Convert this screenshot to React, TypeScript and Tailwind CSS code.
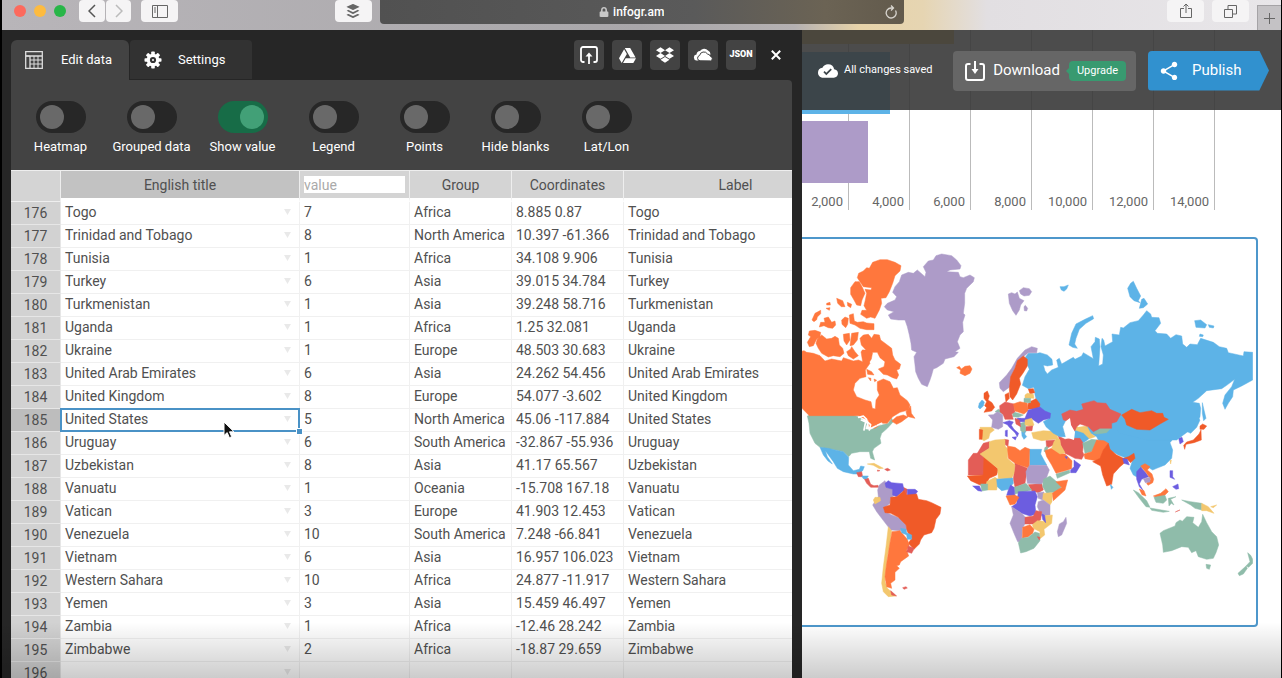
import React from "react";
import { FaBuffer, FaDropbox, FaGoogleDrive, FaLock } from "react-icons/fa";
import { MdCloudDone, MdShare } from "react-icons/md";

const ORANGE = "#ff773d";
const PURPLE = "#ad9bc8";
const RED = "#f05a28";
const GREEN = "#8fbcaa";
const BLUE = "#5db3e7";
const YELLOW = "#f3c76e";
const SALMON = "#e35d57";
const VIOLET = "#6c5de0";

type Shape = [fill: string, d: string];

const northAtlantic: Shape[] = [
  [ORANGE, "M218,82 L240,74 L262,74 L285,82 L303,92 L300,108 L285,122 L278,145 L268,170 L258,188 L243,190 L245,205 L238,225 L225,250 L212,246 L200,250 L182,238 L186,226 L200,226 L192,212 L196,195 L200,175 L195,163 L213,165 L215,158 L190,155 L180,140 L172,128 L176,115 L190,108 L200,98 L208,100Z"],
  [ORANGE, "M165,140 L178,140 L187,157 L195,175 L186,195 L182,212 L170,210 L162,195 L152,178 L152,158Z"],
  [ORANGE, "M110,190 L128,197 L135,215 L124,215 L113,205Z M142,202 L155,208 L152,218 L143,212Z M80,205 L90,202 L91,210 L80,210Z M78,220 L90,218 L88,226Z"],
  [ORANGE, "M36,255 L45,235 L62,226 L62,236 L52,246 L50,254 L42,260Z M62,262 L75,262 L72,250 L85,246 L95,262 L105,258 L107,270 L98,280 L85,278 L72,272 L58,276Z"],
  [ORANGE, "M125,255 L135,246 L145,250 L143,268 L137,278 L126,268Z M148,240 L160,236 L163,258 L172,262 L190,260 L200,264 L222,266 L222,284 L200,284 L180,280 L165,270 L150,265Z"],
  [ORANGE, "M28,288 L45,286 L62,292 L60,305 L50,312 L40,332 L28,335 L22,322 L32,305 L25,300Z M65,300 L80,312 L95,310 L105,304 L115,310 L118,330 L128,340 L132,355 L120,365 L100,362 L85,366 L65,355 L55,340 L48,325 L52,312Z"],
  [ORANGE, "M130,298 L148,295 L150,315 L140,330 L132,318Z M155,295 L175,292 L172,315 L160,330 L150,332Z M140,350 L152,342 L155,335 L165,350 L175,362 L160,372 L145,362Z"],
  [ORANGE, "M180,310 L190,300 L205,298 L215,310 L222,298 L238,300 L242,315 L262,330 L275,340 L278,360 L285,375 L302,388 L298,402 L290,405 L296,420 L290,432 L278,428 L262,420 L250,418 L235,402 L252,395 L255,380 L240,368 L232,352 L218,352 L214,372 L204,388 L190,360 L186,345 L198,345 L184,330Z"],
  [ORANGE, "M0,350 L12,347 L20,352 L40,355 L60,362 L75,378 L95,372 L125,378 L130,368 L160,378 L175,375 L188,380 L183,350 L190,345 L195,358 L210,385 L196,405 L198,425 L180,430 L165,445 L160,465 L170,485 L195,495 L213,500 L217,520 L226,522 L228,495 L238,480 L232,465 L232,440 L250,432 L270,440 L280,460 L292,458 L300,480 L322,497 L330,510 L325,525 L300,532 L278,545 L262,565 L245,565 L225,580 L208,576 L205,556 L175,542 L28,542 L6,520 L0,520Z"],
  [ORANGE, "M275,558 L290,545 L310,540 L322,545 L318,530 L332,513 L334,535 L345,550 L325,545 L305,560 L290,568 L280,562Z M200,403 L215,410 L222,420 L203,418Z M205,428 L213,430 L212,438Z M222,432 L230,436 L224,440Z"],
  [PURPLE, "M370,95 L385,78 L400,75 L408,62 L425,57 L455,62 L470,75 L483,92 L480,102 L450,105 L440,110 L475,112 L480,125 L490,128 L510,120 L523,128 L520,140 L500,160 L494,175 L494,205 L490,235 L495,240 L488,262 L490,290 L480,300 L472,320 L480,340 L465,350 L475,352 L462,365 L435,372 L430,385 L410,398 L400,402 L395,420 L390,435 L382,455 L365,448 L355,430 L347,410 L345,390 L342,365 L350,352 L335,345 L333,325 L328,300 L322,275 L315,255 L295,255 L272,252 L265,240 L282,230 L262,225 L253,215 L262,205 L285,195 L290,185 L278,172 L285,155 L298,140 L305,120 L325,112 L340,115 L352,105 L375,125 L378,112Z"],
  [ORANGE, "M470,398 L478,394 L484,402 L495,394 L510,392 L516,402 L510,415 L495,422 L480,415 L482,405Z"],
];

const northEurasia: Shape[] = [
  [PURPLE, "M145,162 L155,158 L165,162 L172,156 L178,175 L192,182 L182,195 L178,210 L168,226 L158,212 L148,190Z M178,152 L190,143 L208,146 L215,155 L208,166 L192,168 L182,162Z M192,200 L196,196 L203,205 L200,213 L193,212Z"],
  [BLUE, "M300,140 L312,140 L325,135 L320,147 L312,154 L304,150Z M327,315 L335,280 L348,252 L375,238 L398,227 L401,236 L378,250 L358,268 L348,295 L344,312 L352,325 L338,322Z M503,145 L512,130 L520,124 L530,145 L542,168 L535,182 L540,188 L522,182 L510,170Z M545,178 L552,175 L563,192 L550,203 L538,205Z"],
  [BLUE, "M704,242 L722,240 L740,254 L735,264 L708,262Z M745,254 L762,258 L760,264 L748,262Z M720,282 L730,285 L728,290 L718,289Z"],
  [BLUE, "M196,352 L205,340 L232,340 L240,338 L262,345 L276,358 L278,375 L262,378 L250,375 L255,392 L262,402 L275,390 L295,382 L290,360 L298,355 L305,372 L340,352 L345,358 L365,348 L370,338 L400,356 L393,320 L405,305 L406,292 L418,297 L420,320 L416,378 L428,372 L430,345 L423,320 L426,295 L431,300 L435,318 L458,305 L456,282 L478,285 L482,262 L490,264 L510,248 L535,242 L550,225 L560,212 L572,222 L575,232 L597,233 L602,250 L585,272 L592,280 L620,282 L632,295 L648,284 L665,288 L668,312 L680,322 L690,312 L712,314 L722,295 L760,307 L778,320 L800,325 L805,338 L850,348 L852,335 L878,337 L878,420 L845,438 L820,450 L818,470 L805,490 L795,508 L788,490 L795,465 L815,440 L824,418 L800,436 L785,446 L740,452 L715,475 L698,487 L718,490 L722,505 L720,530 L712,550 L690,570 L650,600 L560,600 L480,580 L455,552 L330,545 L318,540 L308,560 L316,590 L300,590 L280,580 L258,560 L250,545 L268,535 L235,500 L225,465 L222,442 L205,446 L187,436 L195,410 L208,388 L200,370Z"],
  [BLUE, "M727,488 L732,510 L738,535 L731,542 L727,520Z"],
  [PURPLE, "M118,428 L140,405 L155,385 L172,355 L195,330 L215,320 L232,325 L230,338 L205,338 L190,350 L172,365 L158,405 L150,440 L130,455 L120,445Z"],
  [RED, "M190,348 L202,358 L202,378 L190,398 L178,415 L182,432 L170,462 L158,480 L150,470 L148,445 L152,410 L165,385 L172,362Z"],
  [RED, "M135,464 L146,458 L148,475 L138,486Z M72,460 L82,453 L88,468 L84,480 L96,488 L104,502 L95,513 L72,517 L80,503 L74,497 L80,485 L72,475Z"],
  [BLUE, "M58,490 L66,480 L73,486 L70,498 L60,507 L55,502Z"],
  [RED, "M205,447 L220,446 L224,458 L210,462Z M212,484 L228,476 L240,492 L238,502 L228,506 L202,508 L205,490Z"],
  [YELLOW, "M195,465 L202,460 L220,463 L222,475 L195,474Z"],
  [GREEN, "M192,475 L212,475 L212,488 L192,488Z M105,515 L115,508 L125,512 L125,520Z M182,550 L196,545 L198,575 L186,570Z M158,515 L175,520 L190,525 L175,532 L158,530Z"],
  [SALMON, "M119,497 L135,486 L162,492 L165,515 L155,522 L160,538 L135,538 L130,525 L120,515Z"],
  [ORANGE, "M160,492 L180,485 L202,490 L204,512 L192,522 L165,513Z"],
  [PURPLE, "M85,525 L100,524 L112,515 L128,524 L128,560 L115,568 L95,562 L98,540Z"],
  [VIOLET, "M172,535 L195,535 L205,510 L240,501 L255,513 L272,520 L270,535 L250,540 L235,550 L215,536 L198,545 L178,545Z"],
  [YELLOW, "M195,540 L215,535 L222,555 L215,560 L195,555Z"],
  [SALMON, "M198,560 L218,558 L216,572 L198,572Z M165,535 L178,540 L182,560 L168,552Z"],
  [SALMON, "M305,522 L330,510 L350,514 L370,508 L365,492 L402,482 L412,488 L438,490 L450,508 L483,522 L470,545 L455,550 L455,565 L420,565 L400,575 L385,560 L360,552 L350,560 L345,572 L335,570 L330,545 L310,540Z"],
  [RED, "M485,525 L515,508 L540,518 L575,512 L590,520 L608,520 L612,532 L625,538 L600,552 L570,570 L530,568 L500,555 L495,538Z"],
];

const americas: Shape[] = [
  [GREEN, "M22,48 L30,45 L160,45 L178,52 L190,62 L200,72 L195,88 L210,90 L235,78 L265,70 L275,55 L280,65 L262,85 L245,100 L240,115 L243,130 L222,145 L217,155 L224,180 L212,175 L208,155 L180,155 L155,160 L146,170 L130,155 L105,150 L60,142 L45,130 L30,100 L27,70Z"],
  [BLUE, "M60,142 L85,145 L105,150 L130,155 L146,172 L145,195 L160,212 L178,208 L182,198 L193,200 L188,212 L175,222 L160,222 L130,215 L112,205 L100,185 L76,152 L82,170 L97,192 L84,183 L70,165Z"],
  [SALMON, "M170,218 L185,215 L188,230 L175,230Z M192,235 L205,235 L212,253 L222,257 L234,256 L236,262 L212,262 L200,250Z M310,262 L322,268 L320,285 L308,278Z"],
  [BLUE, "M185,228 L205,228 L200,236 L190,236Z"],
  [YELLOW, "M202,192 L222,190 L250,205 L238,206 L220,196Z"],
  [SALMON, "M254,208 L263,205 L271,210 L262,213Z M232,210 L240,212 L233,214Z M308,563 L318,560 L322,564 L312,568Z"],
  [PURPLE, "M238,255 L255,242 L262,260 L280,268 L285,285 L272,295 L270,310 L252,325 L255,335 L275,345 L300,355 L318,375 L322,390 L305,392 L272,390 L245,355 L230,335 L218,315 L235,290 L233,270Z"],
  [YELLOW, "M220,300 L225,292 L240,292 L242,302 L225,312Z"],
  [VIOLET, "M255,250 L265,242 L275,248 L308,251 L312,270 L290,290 L278,285 L278,268 L258,262Z M322,268 L345,268 L353,274 L345,285 L322,285Z"],
  [RED, "M272,292 L290,290 L312,272 L320,285 L350,282 L355,298 L380,302 L395,308 L423,322 L420,342 L408,358 L402,385 L395,398 L372,405 L362,420 L358,432 L342,448 L325,430 L335,415 L322,395 L318,375 L295,352 L272,340 L255,338 L250,322 L270,315Z"],
  [YELLOW, "M265,380 L275,392 L270,430 L262,470 L258,510 L255,545 L262,565 L288,588 L265,590 L250,575 L245,550 L250,500 L258,440Z"],
  [ORANGE, "M276,395 L300,392 L322,418 L328,435 L320,450 L326,468 L302,485 L298,495 L290,497 L298,505 L285,517 L285,540 L272,550 L275,565 L260,560 L255,530 L260,490 L268,440Z"],
  [BLUE, "M302,385 L318,388 L320,398 L335,405 L335,418 L322,418 L320,405 L305,398Z"],
  [SALMON, "M325,438 L343,445 L335,460 L320,455Z M272,572 L290,588 L275,585Z"],
];

const eastAndSouth: Shape[] = [
  [BLUE, "M360,118 L450,105 L510,70 L520,95 L550,115 L590,120 L650,90 L650,60 L700,40 L750,90 L740,112 L722,130 L706,122 L690,118 L675,132 L650,140 L650,148 L672,143 L660,158 L668,180 L665,205 L645,225 L620,235 L608,240 L598,234 L572,235 L580,222 L568,240 L562,262 L550,255 L540,235 L548,210 L530,205 L505,195 L480,180 L468,165 L445,150 L440,140 L425,132 L415,148 L400,158 L380,150 L364,142Z"],
  [YELLOW, "M370,102 L385,112 L410,108 L422,130 L436,140 L418,146 L400,128 L375,120Z M245,128 L280,122 L305,124 L326,130 L320,148 L310,148 L275,152 L250,145Z M328,122 L343,130 L340,136 L326,132Z M90,112 L125,112 L133,120 L120,130 L116,145 L102,152 L95,148Z"],
  [SALMON, "M318,122 L328,125 L330,136 L322,132Z M325,138 L345,148 L365,145 L390,145 L400,160 L398,185 L402,195 L395,208 L375,205 L358,196 L345,190 L332,165Z M288,152 L315,150 L310,165 L290,175Z"],
  [RED, "M88,118 L98,120 L96,148 L88,148Z"],
  [VIOLET, "M158,98 L178,92 L190,96 L184,106 L192,118 L206,130 L202,140 L195,128 L178,112 L172,104Z M186,142 L200,140 L196,150Z M166,122 L172,120 L172,140 L166,138Z M195,88 L212,85 L208,95 L215,104 L205,102Z"],
  [BLUE, "M215,125 L228,122 L224,132 L230,140 L222,148 L216,138Z"],
  [GREEN, "M430,130 L450,115 L482,115 L470,128 L440,132Z M398,160 L425,148 L443,150 L435,170 L425,185 L405,190Z M318,252 L358,240 L360,248 L322,265Z M210,105 L220,110 L222,128 L212,122Z M285,172 L294,170 L290,188 L282,184Z"],
  [ORANGE, "M402,192 L425,185 L440,150 L462,152 L475,160 L462,180 L452,205 L438,212 L405,206Z M285,182 L305,175 L330,190 L345,192 L366,212 L365,236 L345,242 L318,250 L305,225 L290,200Z"],
  [YELLOW, "M312,155 L322,142 L330,150 L332,165 L345,188 L330,192 L305,175Z"],
  [VIOLET, "M372,210 L378,215 L392,225 L378,248 L362,248 L362,240 L372,230Z M345,200 L352,200 L350,206Z"],
  [RED, "M428,215 L450,205 L460,180 L475,160 L480,178 L500,195 L520,205 L535,200 L552,190 L555,205 L542,218 L532,208 L520,222 L510,230 L490,252 L485,283 L470,288 L458,255 L452,228Z"],
  [VIOLET, "M518,205 L532,208 L538,225 L522,220Z M560,245 L572,232 L585,245 L596,260 L575,268 L568,282 L580,302 L568,290 L560,268Z M686,145 L696,142 L700,155 L690,162Z M660,242 L668,242 L668,260 L674,268 L660,262Z M668,290 L684,282 L686,296 L678,298Z"],
  [BLUE, "M481,283 L489,292 L484,298Z"],
  [ORANGE, "M572,228 L585,221 L600,230 L592,240 L606,252 L611,268 L608,278 L594,286 L590,280 L602,268 L590,250Z M568,297 L582,302 L588,318 L576,314Z M610,318 L632,310 L648,296 L655,305 L642,318 L620,323Z"],
  [PURPLE, "M580,266 L600,262 L600,276 L586,278Z M680,132 L700,122 L692,142 L684,144Z"],
  [GREEN, "M550,300 L565,308 L590,332 L600,352 L588,350 L568,325Z M600,354 L635,360 L658,364 L640,367 L605,361Z M612,322 L645,316 L650,330 L640,340 L618,337Z M655,325 L678,320 L662,328 L672,345 L664,340 L657,348Z M695,330 L722,335 L755,340 L755,360 L735,355 L722,345Z"],
  [YELLOW, "M755,340 L775,350 L792,370 L770,362 L755,362Z M782,350 L800,345 L790,353Z M660,212 L664,210 L662,222Z"],
  [GREEN, "M630,430 L640,422 L675,408 L678,398 L690,390 L697,394 L710,380 L732,382 L728,398 L745,412 L755,395 L758,373 L770,398 L785,425 L800,440 L806,465 L798,488 L790,505 L770,508 L745,500 L738,482 L725,488 L715,472 L695,470 L665,482 L640,487 L638,465Z M768,523 L782,525 L778,538 L770,535Z M893,488 L902,496 L908,508 L908,520 L896,532 L888,528 L900,515Z M888,528 L892,535 L880,552 L868,557 L864,550Z"],
  [RED, "M750,108 L758,102 L770,108 L762,118 L750,118Z M753,120 L754,150 L732,158 L708,163 L704,178 L701,166 L710,156 L730,150 L747,132Z"],
  [SALMON, "M100,160 L118,155 L118,175 L95,190 L82,190Z M55,210 L70,190 L95,190 L103,200 L105,255 L55,255Z M163,148 L176,150 L174,168 L166,165Z M195,218 L232,235 L228,262 L225,280 L195,292 L190,268Z M235,284 L275,280 L280,300 L265,308 L245,302Z"],
  [RED, "M102,198 L145,238 L140,255 L118,265 L105,288 L90,285 L62,272 L52,258 L100,255Z"],
  [YELLOW, "M118,155 L135,150 L165,148 L165,168 L174,178 L172,205 L195,225 L192,250 L185,266 L145,266 L143,235 L90,192 L118,175Z M110,275 L135,262 L145,268 L140,300 L112,300Z"],
  [ORANGE, "M172,168 L195,172 L210,182 L225,172 L240,178 L238,235 L195,220 L175,205Z"],
  [BLUE, "M240,178 L275,178 L272,192 L290,225 L240,226Z M140,268 L188,264 L190,280 L175,298 L155,302 L142,290Z"],
  [PURPLE, "M228,245 L238,226 L290,226 L298,240 L290,262 L275,282 L232,280Z M262,308 L282,306 L278,330 L265,325Z"],
  [GREEN, "M92,282 L113,282 L113,300 L95,303Z M192,292 L228,280 L245,300 L220,306 L195,312Z M280,268 L300,258 L320,275 L335,290 L318,305 L290,310 L278,290Z"],
  [VIOLET, "M68,288 L88,288 L95,304 L84,302Z M182,285 L192,292 L195,318 L170,316 L175,300Z M205,305 L255,303 L262,320 L255,345 L258,372 L240,378 L215,370 L185,350 L200,340Z"],
  [ORANGE, "M318,275 L353,270 L345,300 L310,332 L306,310 L335,292Z M168,318 L195,315 L207,322 L195,342 L180,345Z"],
  [YELLOW, "M280,310 L306,308 L306,335 L300,345 L278,328Z"],
  [PURPLE, "M265,335 L280,330 L300,345 L300,375 L275,378 L262,350Z M185,350 L215,370 L225,380 L225,402 L217,415 L215,455 L203,455 L192,430 L180,400 L190,375Z M348,382 L350,400 L335,435 L325,440 L322,425 L328,402 L340,395Z"],
  [SALMON, "M225,382 L250,378 L258,362 L275,365 L272,390 L250,402 L225,402Z"],
  [YELLOW, "M278,378 L307,375 L305,400 L282,418 L284,435 L268,448 L270,425 L250,415 L247,404 L262,392 L282,394Z"],
  [VIOLET, "M276,372 L284,376 L287,398 L278,388Z"],
  [ORANGE, "M218,412 L240,404 L252,418 L248,430 L235,440 L217,445Z"],
  [GREEN, "M205,458 L215,445 L235,442 L255,426 L268,430 L270,452 L252,475 L228,485 L212,489Z"],
  [SALMON, "M676,366 L690,360 L680,364Z M262,440 L270,442 L268,450Z"],
];

function Region({ x, y, shapes }: { x: number; y: number; shapes: Shape[] }) {
  return (
    <g transform={`translate(${x} ${y}) scale(0.33333)`}>
      {shapes.map(([fill, d], i) => (
        <path key={i} d={d} fill={fill} stroke={fill} strokeWidth={1.5} strokeLinejoin="round" />
      ))}
    </g>
  );
}

function WorldMap() {
  return (
    <svg viewBox="802 239 451 386" className="block w-full" role="img" aria-label="World map">
      <Region x={800} y={400} shapes={americas} />
      <Region x={800} y={235} shapes={northAtlantic} />
      <Region x={950} y={390} shapes={eastAndSouth} />
      <Region x={960} y={240} shapes={northEurasia} />
      <g transform="translate(800 400) scale(0.33333)" fill="none" stroke="#fff" strokeWidth={5} strokeLinecap="round" strokeLinejoin="round">
        <path d="M176,52 L190,48 L200,58 M184,60 L197,66 M196,70 L192,90 M202,66 L212,74 L208,90 M215,84 L228,78 M232,76 L245,70" />
      </g>
      <path d="M1066,421 l4,-3 1,7 4,7 -1,8 -6,-2 1,-8z" fill="#fff" />
    </svg>
  );
}

type Row = [title: string, value: string, group: string, coords: string];

const rows: Row[] = [
  ["Togo", "7", "Africa", "8.885 0.87"],
  ["Trinidad and Tobago", "8", "North America", "10.397 -61.366"],
  ["Tunisia", "1", "Africa", "34.108 9.906"],
  ["Turkey", "6", "Asia", "39.015 34.784"],
  ["Turkmenistan", "1", "Asia", "39.248 58.716"],
  ["Uganda", "1", "Africa", "1.25 32.081"],
  ["Ukraine", "1", "Europe", "48.503 30.683"],
  ["United Arab Emirates", "6", "Asia", "24.262 54.456"],
  ["United Kingdom", "8", "Europe", "54.077 -3.602"],
  ["United States", "5", "North America", "45.06 -117.884"],
  ["Uruguay", "6", "South America", "-32.867 -55.936"],
  ["Uzbekistan", "8", "Asia", "41.17 65.567"],
  ["Vanuatu", "1", "Oceania", "-15.708 167.18"],
  ["Vatican", "3", "Europe", "41.903 12.453"],
  ["Venezuela", "10", "South America", "7.248 -66.841"],
  ["Vietnam", "6", "Asia", "16.957 106.023"],
  ["Western Sahara", "10", "Africa", "24.877 -11.917"],
  ["Yemen", "3", "Asia", "15.459 46.497"],
  ["Zambia", "1", "Africa", "-12.46 28.242"],
  ["Zimbabwe", "2", "Africa", "-18.87 29.659"],
  ["", "", "", ""],
];

const FIRST_ROW = 176;
const SELECTED_ROW = 185;

function DataTable() {
  const cell = "h-[23px] border-r border-b border-[#f0f0f0] p-0 pb-0.5 pl-1 text-left font-normal";
  const head = "h-[31px] border-r border-b-4 border-r-[#eee] border-b-white bg-[#d4d4d4] p-0 font-normal";
  return (
    <table className="w-[837px] table-fixed border-separate border-spacing-0 bg-white text-sm leading-4 whitespace-nowrap text-[#505050]">
      <colgroup>
        <col className="w-[50px]" />
        <col className="w-[239px]" />
        <col className="w-[110px]" />
        <col className="w-[102px]" />
        <col className="w-[112px]" />
        <col className="w-[224px]" />
      </colgroup>
      <thead>
        <tr>
          <th scope="col" aria-label="Row" className="border-r border-b border-[#eee] bg-[#d4d4d4] p-0" />
          <th scope="col" className="h-[31px] border-r border-b-4 border-r-[#eee] border-b-white bg-[#c2c2c2] p-0 font-normal">English title</th>
          <th scope="col" className={head}>
            <input
              aria-label="Value column name"
              placeholder="value"
              className="ml-1 block h-[17px] w-[101px] bg-white p-0 text-sm leading-4 outline-none placeholder:text-[#aaa]"
            />
          </th>
          <th scope="col" className={head}>Group</th>
          <th scope="col" className={head}>Coordinates</th>
          <th scope="col" className={head}>Label</th>
        </tr>
      </thead>
      <tbody>
        {rows.map(([title, value, group, coords], i) => {
          const n = FIRST_ROW + i;
          const selected = n === SELECTED_ROW;
          return (
            <tr key={n}>
              <th
                scope="row"
                className={`h-[23px] border-r border-b border-[#e6e6e6] p-0 text-center font-normal ${selected ? "bg-[#bdbdbd]" : "bg-[#d2d2d2]"}`}
              >
                {n}
              </th>
              <td className={`${cell} ${selected ? "relative z-10" : ""}`}>
                <div className="flex items-center justify-between pr-2">
                  <span>{title}</span>
                  <svg viewBox="0 0 8 7" className="h-1.5 w-[7px]" fill="#e9e9e9" aria-hidden="true">
                    <path d="M0 0h8L4 7z" />
                  </svg>
                </div>
                {selected && (
                  <>
                    <div className="absolute -inset-x-px -top-px -bottom-px border-2 border-[#4a92c6]" />
                    <div className="absolute -right-1 -bottom-1 box-content size-[5px] border border-white bg-[#4a92c6]" />
                    <svg viewBox="0 0 12 18" className="absolute top-3 right-16 h-[18px] w-3" aria-hidden="true">
                      <path d="M1 1v13.500l3.200-2.900 2.200 5.100 2.300-1-2.200-4.900H11z" fill="#111" stroke="#fff" />
                    </svg>
                  </>
                )}
              </td>
              <td className={cell}>{value}</td>
              <td className={cell}>{group}</td>
              <td className={cell}>{coords}</td>
              <td className={cell}>{title}</td>
            </tr>
          );
        })}
      </tbody>
    </table>
  );
}

function Toggle({ label, on = false }: { label: string; on?: boolean }) {
  return (
    <label className="flex w-[91px] flex-col items-center gap-[5px]">
      <input type="checkbox" defaultChecked={on} className="peer sr-only" />
      <span className="flex h-8 w-[50px] rounded-full bg-[#272727] p-1 peer-checked:justify-end peer-checked:bg-[#176c47] [&>i]:bg-[#696969] peer-checked:[&>i]:bg-[#42a077]">
        <i className="block size-6 rounded-full" />
      </span>
      <span className="text-[13px] leading-[18px] whitespace-nowrap text-white">{label}</span>
    </label>
  );
}

function Gear() {
  return (
    <svg viewBox="0 0 18 18" className="size-[18px]" fill="#fff" aria-hidden="true">
      {[0, 45, 90, 135].map((a) => (
        <rect key={a} x="7.200" y="0.500" width="3.600" height="17" rx="0.800" transform={`rotate(${a} 9 9)`} />
      ))}
      <circle cx="9" cy="9" r="6.300" />
      <circle cx="9" cy="9" r="3.100" fill="#323232" />
      <circle cx="9" cy="9" r="1" fill="#fff" />
    </svg>
  );
}

function SheetIcon() {
  return (
    <svg viewBox="0 0 18 18" className="size-[18px]" fill="none" stroke="#ddd" aria-hidden="true">
      <path strokeWidth="1.300" d="M.7.700h16.600v16.600H.7zM.7 5h16.600M5 5v12.300" />
      <path d="M9 5v12M13 5v12M5 9h12M5 13h12M.7 5h4" />
    </svg>
  );
}

function UploadIcon() {
  return (
    <svg viewBox="0 0 20 20" className="size-5" fill="none" stroke="#fff" strokeWidth="1.800" aria-hidden="true">
      <path d="M5.500 17H4a2 2 0 0 1-2-2V4a2 2 0 0 1 2-2h12a2 2 0 0 1 2 2v11a2 2 0 0 1-2 2h-1.500" />
      <path d="M10 19V9" />
      <path d="M6.500 11.500 10 7.500l3.500 4z" fill="#fff" stroke="none" />
    </svg>
  );
}

function OneDriveIcon() {
  return (
    <svg viewBox="0 0 20 14" className="h-[14px] w-5" aria-hidden="true">
      <path d="M1 10a3 3 0 0 1 2.500-3.500A4 4 0 0 1 7 3a5 5 0 0 1 8-.5 4.200 4.200 0 0 1 2.500 4L5 12.500H4A2.700 2.700 0 0 1 1 10z" fill="#fff" />
      <path d="M7 12.800a2.700 2.700 0 0 1-.4-5.300A4.300 4.300 0 0 1 14.500 6a3.600 3.600 0 0 1 3 2.400 2.300 2.300 0 0 1 0 4.500z" fill="#fff" stroke="#434343" strokeWidth="1" />
    </svg>
  );
}

function EditorPanel() {
  const source = "flex size-[30px] items-center justify-center rounded bg-[#434343] text-white";
  return (
    <section className="relative flex w-[62.55%] shrink-0 flex-col overflow-hidden bg-[#262626] pr-2.5 pl-[9px]">
      <div className="flex h-[50px] items-end justify-between">
        <div role="tablist" className="flex gap-px text-[13px] text-white">
          <button role="tab" aria-selected="true" className="flex h-10 w-[118px] items-center gap-[18px] rounded-t-md bg-[#434343] pl-3.5">
            <SheetIcon />
            Edit data
          </button>
          <button role="tab" aria-selected="false" className="mb-px flex h-[39px] w-[122px] items-center gap-4 rounded-t-sm bg-[#323232] pl-3.5">
            <Gear />
            Settings
          </button>
        </div>
        <div className="mb-2.5 flex items-center gap-2">
          <button aria-label="Upload file" className={source}><UploadIcon /></button>
          <button aria-label="Google Drive" className={source}><FaGoogleDrive className="size-[17px]" /></button>
          <button aria-label="Dropbox" className={source}><FaDropbox className="size-[18px]" /></button>
          <button aria-label="OneDrive" className={source}><OneDriveIcon /></button>
          <button className="flex size-[30px] items-center justify-center rounded bg-[#434343] text-[9px] font-black text-white">JSON</button>
          <button aria-label="Close" className="mr-1 flex w-6 justify-center">
            <svg viewBox="0 0 10 10" className="size-2.5" stroke="#fff" strokeWidth="2" aria-hidden="true">
              <path d="M.8.800l8.400 8.400M9.200.800.8 9.200" />
            </svg>
          </button>
        </div>
      </div>
      <div className="flex h-[90px] shrink-0 items-start rounded-tr bg-[#434343] pt-[21px] pl-1">
        <Toggle label="Heatmap" />
        <Toggle label="Grouped data" />
        <Toggle label="Show value" on />
        <Toggle label="Legend" />
        <Toggle label="Points" />
        <Toggle label="Hide blanks" />
        <Toggle label="Lat/Lon" />
      </div>
      <div className="min-h-0 flex-1 overflow-hidden border-t border-[#eee] bg-white">
        <DataTable />
      </div>
    </section>
  );
}

function PreviewHeader() {
  return (
    <header className="absolute inset-x-0 top-0 flex h-20 items-center bg-[#383838]/90 pt-px pr-3 pl-4 text-white">
      <MdCloudDone className="size-5" />
      <span className="ml-1.5 text-[11px] whitespace-nowrap">All changes saved</span>
      <button className="ml-auto flex h-10 items-center rounded-sm bg-[#666] pr-2.5 pl-3">
        <svg viewBox="0 0 20 20" className="size-5" fill="none" stroke="#fff" strokeWidth="2" aria-hidden="true">
          <path d="M5.500 3H3a2 2 0 0 0-2 2v12a2 2 0 0 0 2 2h14a2 2 0 0 0 2-2V5a2 2 0 0 0-2-2h-2.500M10 0v10" />
          <path d="M6.500 8 10 13l3.500-5z" fill="#fff" stroke="none" />
        </svg>
        <span className="ml-2 text-[15px]">Download</span>
        <span className="ml-1.5 flex items-center">
          <svg viewBox="0 0 3 6" className="h-1.5 w-[3px]" fill="#389a70" aria-hidden="true"><path d="M3 0v6L0 3z" /></svg>
          <span className="rounded-sm bg-[#389a70] px-2 text-[11px] leading-5">Upgrade</span>
        </span>
      </button>
      <button className="ml-3 flex h-10 w-[121px] items-center gap-3 rounded bg-[#3191cf] pl-2.5 text-[15px] [clip-path:polygon(0_0,92%_0,100%_50%,92%_100%,0_100%)]">
        <MdShare className="size-[22px]" />
        Publish
      </button>
    </header>
  );
}

function BarChart() {
  const ticks = ["4,000", "6,000", "8,000", "10,000", "12,000", "14,000"];
  return (
    <div className="relative flex h-[180px] items-end text-[13px] leading-4 text-[#666]">
      <div className="flex h-full w-[47px] shrink-0 items-end justify-end border-r border-[#bbb] pr-[5px]">2,000</div>
      {ticks.map((t) => (
        <div key={t} className="flex h-full w-[61px] shrink-0 items-end justify-end border-r border-[#bbb] pr-[5px]">{t}</div>
      ))}
      <div className="absolute top-0 left-0 h-3.5 w-[152px] bg-[#f5c76a]" />
      <div className="absolute top-[22px] left-0 h-[62px] w-[88px] bg-[#5db3e7]" />
      <div className="absolute top-[91px] left-0 h-[62px] w-[66px] bg-[#ad9bc8]" />
    </div>
  );
}

function Preview() {
  return (
    <section className="relative min-w-0 flex-1 overflow-hidden bg-white">
      <BarChart />
      <div className="mt-[27px] mr-[23px] overflow-hidden rounded-r border-2 border-l-0 border-[#4d97cb] pr-[3px]">
        <WorldMap />
      </div>
      <PreviewHeader />
    </section>
  );
}

function BrowserBar() {
  const btn = "flex h-[22px] items-center justify-center rounded bg-[#f5f4f5] text-[#666]";
  return (
    <header className="flex h-[31px] shrink-0 items-start border-b border-[#77757a] bg-[linear-gradient(90deg,#b8b5b9_0%,#a9a7aa_50%,#b5b1b2_62%,#e7d3a9_67%,#e6d5b2_72%,#e2dfe2_77%,#e8e6e9_100%)]">
      <div className="flex w-[26%] shrink-0 pl-3">
        <div className="flex gap-2 pt-[5px]">
          <span className="size-3 rounded-full bg-[#fc6a5d]" />
          <span className="size-3 rounded-full bg-[#fdbb40]" />
          <span className="size-3 rounded-full bg-[#28b648]" />
        </div>
        <div className="ml-[13px] flex gap-px">
          <button aria-label="Back" className={`${btn} w-[26px]`}>
            <svg viewBox="0 0 8 14" className="h-3.5 w-2" fill="none" stroke="#555" strokeWidth="1.500"><path d="M7 1 1 7l6 6" /></svg>
          </button>
          <button aria-label="Forward" className={`${btn} w-[25px]`}>
            <svg viewBox="0 0 8 14" className="h-3.5 w-2" fill="none" stroke="#bbb" strokeWidth="1.500"><path d="m1 1 6 6-6 6" /></svg>
          </button>
        </div>
        <button aria-label="Sidebar" className={`${btn} ml-2.5 w-[37px]`}>
          <svg viewBox="0 0 16 13" className="h-[13px] w-4" fill="none" stroke="#666"><path d="M.5.500h15v12H.5zM5.500.500v12M2 3h2M2 5h2M2 7h2" /></svg>
        </button>
      </div>
      <button aria-label="Buffer" className={`${btn} w-[37px]`}>
        <FaBuffer className="size-4" />
      </button>
      <div className="ml-2 flex h-6 w-[41%] items-center rounded-b bg-[linear-gradient(90deg,#515151_0%,#5a5a5a_60%,#6b6354_85%,#625a4c_100%)] pr-1.5 text-white">
        <div className="flex flex-1 items-center justify-center gap-1">
          <FaLock className="size-2.5 text-[#c8c8c8]" />
          <input aria-label="Address" defaultValue="infogr.am" className="field-sizing-content bg-transparent p-0 text-xs font-medium outline-none" />
        </div>
        <button aria-label="Reload">
          <svg viewBox="0 0 14 14" className="size-3.5" fill="none" stroke="#d8d5cf" strokeWidth="1.300"><path d="M11.500 5.500A5 5 0 1 1 7 3h2M7 .5 9.500 3 7 5.500" /></svg>
        </button>
      </div>
      <button aria-label="Share" className={`${btn} ml-auto w-[37px]`}>
        <svg viewBox="0 0 12 16" className="h-4 w-3" fill="none" stroke="#666"><path d="M4 5.500H.5v9h11v-9H8M6 10V1M3.500 3.500 6 1l2.500 2.500" /></svg>
      </button>
      <button aria-label="Show tabs" className={`${btn} ml-2 w-[37px]`}>
        <svg viewBox="0 0 13 13" className="size-[13px]" fill="none" stroke="#666"><path d="M.5 4.500h8v8h-8zM4 4V.5h8.500V9H9" /></svg>
      </button>
      <button aria-label="New tab" className="mt-[5px] ml-2 flex h-[25px] w-6 items-center justify-center border-t border-l border-[#a5a3a6] bg-[#c4c2c5]">
        <svg viewBox="0 0 11 11" className="size-[11px]" stroke="#666"><path d="M5.500 0v11M0 5.500h11" /></svg>
      </button>
    </header>
  );
}

export default function App() {
  return (
    <div className="relative flex h-screen flex-col overflow-hidden border-r border-l-2 border-black bg-white font-['Roboto',sans-serif]">
      <BrowserBar />
      <main className="-mt-px flex min-h-0 flex-1">
        <EditorPanel />
        <Preview />
      </main>
      <div className="pointer-events-none absolute inset-x-0 bottom-0 h-14 bg-linear-to-b from-transparent to-black/20" />
    </div>
  );
}
